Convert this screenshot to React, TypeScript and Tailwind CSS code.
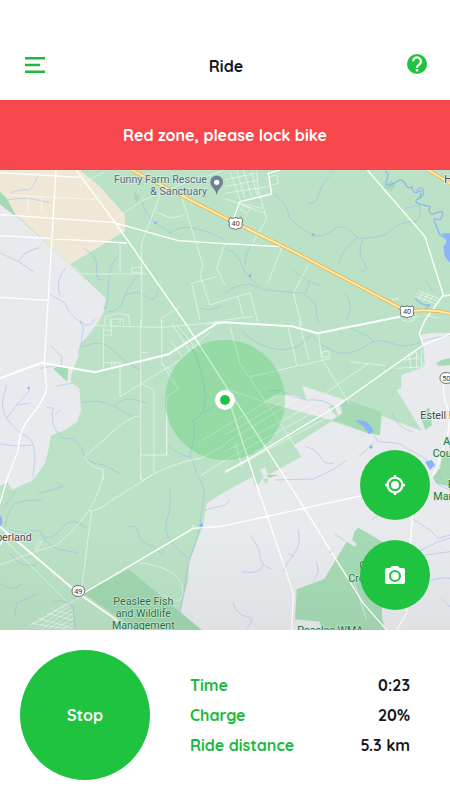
import React from "react";

const stats = [
  { label: "Time", value: "0:23" },
  { label: "Charge", value: "20%" },
  { label: "Ride distance", value: "5.3 km" },
];

function MenuIcon() {
  return (
    <svg viewBox="0 0 20 16" className="h-4 w-5" fill="currentColor" aria-hidden="true">
      <path d="M0 0H20V2.4H0ZM0 6.8H15V9.2H0ZM0 13.6H20V16H0Z" />
    </svg>
  );
}

function HelpIcon() {
  return (
    <svg viewBox="0 0 20 20" className="size-5" aria-hidden="true">
      <circle cx="10" cy="10" r="10" fill="currentColor" />
      <path
        d="M6.1 7.2A3.9 3.9 0 1 1 12.8 10L11.2 11.4Q10 12.4 10 14"
        fill="none"
        stroke="#fff"
        strokeWidth="2.2"
      />
      <path d="M8.8 15H11.3V17.4H8.8Z" fill="#fff" />
    </svg>
  );
}

function LocateIcon() {
  return (
    <svg viewBox="0 0 20 20" className="size-5" aria-hidden="true">
      <path d="M8.8 0H11.2V3H8.8ZM8.8 17H11.2V20H8.8ZM0 8.8H3V11.2H0ZM17 8.8H20V11.2H17Z" fill="currentColor" />
      <circle cx="10" cy="10" r="7.4" fill="none" stroke="currentColor" strokeWidth="2.4" />
      <circle cx="10" cy="10" r="4" fill="currentColor" />
    </svg>
  );
}

function CameraIcon() {
  return (
    <svg viewBox="0 0 20 18" className="h-[18px] w-5" aria-hidden="true">
      <path
        d="M7 0H13L14.8 2H18Q20 2 20 4V16Q20 18 18 18H2Q0 18 0 16V4Q0 2 2 2H5.2ZM10 4A6 6 0 1 0 10 16A6 6 0 1 0 10 4Z"
        fill="currentColor"
        fillRule="evenodd"
      />
      <circle cx="10" cy="10" r="3.9" fill="currentColor" />
    </svg>
  );
}

function Shield({ x, y, label }: { x: number; y: number; label: string }) {
  return (
    <g transform={`translate(${x} ${y})`}>
      <path
        d="M-17 -17Q-9 -13 0 -17Q9 -13 17 -17L21 -9Q17 0 20 8Q17 17 6 16L0 19L-6 16Q-17 17 -20 8Q-17 0 -21 -9Z"
        fill="#fff"
        stroke="#6b7075"
        strokeWidth="3"
      />
      <text y="8" textAnchor="middle" fontSize="22" fill="#3c4043">
        {label}
      </text>
    </g>
  );
}

function RoundSign({ x, y, label }: { x: number; y: number; label: string }) {
  return (
    <g transform={`translate(${x} ${y})`}>
      <rect x="-19" y="-16" width="38" height="32" rx="15" fill="#fff" stroke="#6b7075" strokeWidth="3" />
      <text y="8" textAnchor="middle" fontSize="22" fill="#3c4043">
        {label}
      </text>
    </g>
  );
}

function Terrain() {
  return (
    <g>
      <rect width="1350" height="1380" fill="#bbe2c6" />
      <path d="M0 0H240L300 50L375 135V183L210 283L0 90Z" fill="#f0e8d7" />
      <path
        d="M0 103L50 140L210 283L317 385L310 430L295 455L270 490L243 520L235 560L215 610L212 635L238 655L243 720L232 755L195 780L152 797L148 830L135 880L98 932L65 945L37 960L22 937L0 948Z"
        fill="#e8eaed"
      />
      <path d="M0 65L20 84L50 141L0 102Z" fill="#a6dab5" />
      <path d="M160 597L172 588L205 592L202 635Z" fill="#a6dab5" />
      <path
        d="M1350 488L1295 489L1260 495L1270 530L1275 590L1205 615L1203 655L1190 660L1265 782L1145 738L1140 795L1105 790L995 754L883 825L903 860L800 918L805 935L795 940L788 920L780 938L765 948L758 920L675 965L620 1000L610 1060L600 1090L567 1180L565 1230L540 1325L605 1380H1350Z"
        fill="#e8eaed"
      />
      <path
        d="M790 695L825 675L880 675L920 690L907 647L1035 690L1018 704L1025 730L1015 738L1002 704L985 711L1010 740L995 750Z"
        fill="#e8eaed"
      />
      <path d="M780 900L795 892L807 920L795 928Z" fill="#e8eaed" />
      <path d="M1040 690L1143 725L1140 795L1105 790L1000 750L1016 739L1030 728L1024 708Z" fill="#a6dab5" />
      <path d="M1308 580L1325 570L1350 565V585L1318 588ZM1268 725L1288 712L1296 765L1276 780L1265 750ZM1350 845L1325 865L1320 895L1300 920L1308 940L1350 950Z" fill="#a6dab5" />
      <path d="M800 915H835L808 923ZM385 1198L605 1380H412L250 1270Z" fill="#a0d7b0" />
      <path
        d="M1075 1073L1155 1120L1145 1335L1155 1380H965L960 1355L885 1348L890 1258L973 1227L1040 1115L1065 1130L1070 1122L1057 1110L1063 1085Z"
        fill="#a6dab5"
      />
      <path d="M1150 48L1175 30L1186 46L1175 62L1155 57ZM405 65L420 80L412 95L400 85Z" fill="#a6dab5" />
    </g>
  );
}

function Water() {
  return (
    <g>
      <path d="M1325 190H1350V278L1335 260L1330 230L1340 215Z" fill="#8ab4f8" />
      <path
        d="M1155 5Q1170 8 1160 30T1180 42Q1205 20 1215 40T1235 50Q1240 75 1255 65T1258 85Q1275 75 1270 60T1250 62M1255 85Q1240 95 1255 100T1290 110Q1280 140 1310 128T1320 150Q1295 140 1305 160T1320 195L1338 205M1245 385Q1270 410 1285 405T1265 425"
        fill="none"
        stroke="#8fb9ed"
        strokeWidth="4"
      />
      <path d="M1065 752Q1110 745 1120 785L1105 792Q1095 765 1065 752ZM1275 875L1295 870L1305 885L1290 900ZM0 1035Q15 1055 0 1070ZM597 1065L610 1058L605 1080Z" fill="#8ab4f8" />
      <g fill="none" stroke="#86adf0" strokeOpacity="0.4" strokeWidth="3">
        <g transform="translate(0 -15)">
          <path d="M30 85Q65 70 80 75T115 30M20 105Q80 95 110 105L150 112M0 263Q35 280 55 290T100 320M55 290Q75 255 120 248M195 310Q165 350 180 390M150 388L195 415Q205 445 240 470T285 460M250 250Q295 270 290 310T310 345M360 268Q325 295 325 365T310 430M415 330Q380 370 370 405T325 440M370 395Q410 370 440 395T475 365M425 110Q440 160 475 180T510 205Q540 180 585 190T675 225M600 430Q640 440 665 420" />
        </g>
        <g transform="translate(675 -15)">
          <path d="M325 20Q290 55 280 90T250 112M145 85Q190 120 190 145T270 215Q310 210 330 190T400 220Q480 220 500 195T575 170Q590 150 585 120L540 130M395 220Q350 255 340 295M415 220Q395 260 415 290T410 320M0 250Q40 265 50 300T120 375L235 385L270 415L280 475M80 235Q60 270 60 300M0 385Q55 340 105 370M200 315L255 350L240 385M255 350L285 360M360 385Q390 420 365 465M600 345L625 380" />
        </g>
        <g transform="translate(0 450)">
          <path d="M240 0L250 25L245 60L235 100M150 75L185 110L185 135L120 145M20 195Q-5 260 20 295Q55 340 80 350T105 420L98 470M20 295L50 255L90 210M50 255L85 250M140 262L160 265Q150 305 170 335T215 355Q240 370 250 400T310 435L360 460M165 285L180 270M0 372L50 378L95 375M170 198L215 190M245 80Q310 55 340 90T425 152M245 248Q300 235 345 260T400 290M345 260Q370 220 440 250M550 45Q590 90 610 185T580 300Q590 340 570 400L590 460M610 280L640 260M505 375Q530 405 570 410" />
        </g>
        <g transform="translate(675 450)">
          <path d="M50 30Q90 75 140 85T225 75L260 45Q290 80 330 95T420 80Q455 50 500 70T600 60L675 45M370 20L430 50L450 70M125 215Q160 205 185 220T245 240Q305 235 330 265M500 275Q510 320 565 337M445 345L460 365L520 370L600 415L640 450L650 480M400 410L435 380L450 365M240 380Q270 385 285 410T325 430M150 480L265 477L330 445L365 420" />
        </g>
        <g transform="translate(0 915)">
          <path d="M15 155Q25 85 60 80T125 75M115 55L190 35L170 20M10 100L50 45M30 165L80 175Q110 155 130 180T200 145Q230 130 260 160M120 175Q150 220 185 225T235 235M30 235Q60 280 110 270M0 325Q35 355 70 325M510 40Q515 90 500 140T565 250M385 155Q410 145 415 175T460 215L490 240M615 105L675 90M590 0Q620 35 610 80T600 160L565 265L540 420M160 380Q210 370 220 400L225 460M45 420L50 385L115 355" />
        </g>
        <g transform="translate(675 915)">
          <path d="M75 180Q105 220 105 245T140 282M50 290Q105 300 115 270M220 165Q230 210 205 240T175 290M190 235L205 243M275 260L280 290L265 320M325 175L360 198M25 385Q35 420 65 425T65 460M560 130L615 165L640 190L675 180M570 235L640 200L675 190M600 240L675 230M440 135L490 100M0 90L15 75M620 315Q650 305 675 310M650 370L675 395M620 0L640 30L675 45" />
        </g>
      </g>
      <g fill="#8ab4f8">
        <circle cx="466" cy="158" r="4" />
        <circle cx="940" cy="194" r="4" />
        <circle cx="750" cy="317" r="4" />
        <circle cx="86" cy="654" r="4" />
        <circle cx="1113" cy="831" r="5" />
        <circle cx="993" cy="1145" r="4" />
      </g>
    </g>
  );
}

function Roads() {
  return (
    <g fill="none" strokeLinejoin="round">
      {/* minor tracks */}
      <g stroke="#fff" strokeOpacity="0.5" strokeWidth="3">
        <g transform="translate(0 -15)">
          <path d="M20 90L285 103M85 90V145M125 92V145M240 60L315 20M340 165L430 105L540 60L675 15M480 90L425 235V480M465 140L510 158L550 152M545 95L590 240L610 300L600 330L630 420L675 405M675 235L650 310L675 360M575 355L650 335M575 355L600 465M360 235V327M220 300L245 327H440M395 308H425V322H395ZM315 480V455L355 445L385 450L390 480M330 480V462H370V480M485 480V460L540 425M620 480Q650 465 675 470" />
        </g>
        <g transform="translate(675 -15)">
          <path d="M0 100L120 145L125 160L80 240L5 235M15 20L45 105M35 15L60 100M55 15L80 95M80 20L95 90M95 20L100 90M0 45L90 25M0 65L100 45M0 85L130 65M100 75L120 145M55 120L75 130L65 145L48 135ZM45 115L110 130M135 35L155 30L160 55L140 60M170 250L128 355M250 300L205 385L230 480M0 405L75 383L100 475M38 395L55 455M0 465L85 455M575 385L640 410M580 378L645 402M570 393L635 418M595 380L580 405M610 385L595 410M625 392L610 415M500 405L520 400M535 440L550 460L580 455M600 450L640 460" />
        </g>
        <g transform="translate(0 450)">
          <path d="M285 17L485 22L675 5M310 25V145M310 30H335V45H310M335 0V30M360 0V10M422 0V480M485 0V130L535 207L500 230V405M485 130L520 160M310 128H360V230L540 120L630 35M335 125V140M345 125V140M425 97H445M422 190L462 210V457M500 280V405H422M255 410L350 325Q380 295 420 287M255 410Q265 440 310 450V480M430 480Q510 430 600 415L675 375M605 362L675 320M605 465L675 420M515 10L570 95M530 15L595 95M515 65L545 110M550 60L580 85" />
        </g>
        <g transform="translate(675 450)">
          <path d="M15 20L45 130L215 385M188 15L215 135M222 5L253 120M75 170L320 115M280 40L290 115L375 255M288 97L310 93L315 108L295 114ZM375 125L480 137M300 220L430 130M0 205L115 245M0 320L175 215M0 345L190 235M0 370L220 235M0 395L250 260M0 420L280 270M0 460L310 290M30 365L50 440M510 145L600 140M535 130L570 95L600 140M525 120L580 115M550 100L560 150M575 95L575 145M590 90V140M530 0L550 5L570 0" />
        </g>
        <g transform="translate(0 915)">
          <path d="M310 0Q300 50 270 100T170 210L105 230L0 270M265 108Q290 110 330 80L455 0M275 108L245 340M105 225L115 200H125L110 230M15 195L200 380M420 263Q540 280 548 340T490 360M245 365L90 450M100 450L200 385M110 460L210 392M125 462L217 402M145 462L220 415M165 462L220 430M185 462L220 445M95 445L200 462M115 430L220 460M140 415L220 435M160 405L220 420M420 0L430 20M575 165L580 150L590 160" />
        </g>
        <path d="M1055 1215L1100 1350" />
      </g>
      {/* local roads */}
      <g stroke="#fff">
        <path strokeWidth="4" d="M0 8L238 22M228 0L340 150L560 465L675 644L860 930L1090 1300L1160 1380M168 0L140 465L133 580L140 650Q135 690 95 735T55 840L20 930L0 1000M0 134L340 157L535 212L675 221L840 230M0 197L380 219M0 382L143 391M695 160L720 95L815 72L805 10L840 0M1102 0L1275 200L1330 375L1275 450L1258 490L1270 525M1350 492L1270 525L1010 708L745 868L675 905M690 700L765 930L880 1270L875 1380M675 1067L1080 978L1140 965M250 1270L580 1075L675 1068M1350 375L1330 378M1330 640Q1330 690 1342 710T1342 800L1310 895L1240 1010L1230 1130L1220 1330L1190 1380M0 1125L20 1090" />
        <path strokeWidth="6" d="M0 625L125 578L285 607L505 553L650 460L675 457L875 469L953 490L1200 440M0 1070L235 1270L350 1350L390 1380" />
      </g>
      {/* highway */}
      <path d="M395 0L675 143L885 247L1195 410L1220 425Q1290 415 1350 430M1285 0L1350 40" stroke="#efb94f" strokeWidth="11" />
      <path d="M395 0L675 143L885 247L1195 410L1220 425Q1290 415 1350 430M1285 0L1350 40" stroke="#ffefb5" strokeWidth="5" />
    </g>
  );
}

function MapLabels() {
  return (
    <g fontSize="32" fontWeight="400" style={{ fontFamily: "Roboto, sans-serif" }} strokeLinejoin="round">
      <Shield x={707} y={160} label="40" />
      <Shield x={1221} y={425} label="40" />
      <RoundSign x={235} y={1263} label="49" />
      <RoundSign x={1339} y={624} label="50" />
      <path d="M650 77Q646 60 636 51Q630 44 630 36A20 20 0 0 1 670 36Q670 44 664 51Q654 60 650 77Z" fill="#6f8294" stroke="#e5f3e9" strokeWidth="1" />
      <circle cx="650" cy="37" r="8" fill="#fff" />
      <g fill="#566b7f" stroke="#d9efdf" strokeWidth="4" paintOrder="stroke" textAnchor="end">
        <text x="621" y="40">Funny Farm Rescue</text>
        <text x="621" y="75">&amp; Sanctuary</text>
      </g>
      <g fill="#45494d" stroke="#f4f7f5" strokeWidth="4" paintOrder="stroke">
        <text x="1333" y="39">Ha</text>
        <text x="1261" y="746">Estell Manor</text>
        <text x="95" y="1112" textAnchor="end">Cumberland</text>
      </g>
      <g fill="#1f7544" stroke="#d3edda" strokeWidth="4" paintOrder="stroke">
        <text x="1330" y="824">Atlantic</text>
        <text x="1298" y="860">County</text>
        <text x="1343" y="954">Park</text>
        <text x="1300" y="990">Manor</text>
        <text x="1078" y="1198">Great</text>
        <text x="1045" y="1236">Creek</text>
        <g textAnchor="middle">
          <text x="430" y="1306">Peaslee Fish</text>
          <text x="430" y="1341">and Wildlife</text>
          <text x="430" y="1377">Management</text>
          <text x="991" y="1391">Peaslee WMA</text>
        </g>
      </g>
    </g>
  );
}

function RideMap() {
  return (
    <svg
      viewBox="0 0 1350 1380"
      preserveAspectRatio="xMidYMid slice"
      className="absolute inset-0 size-full"
      role="img"
      aria-label="Map of your current location"
    >
      <defs>
        <linearGradient id="map-shade" x1="0" y1="0" x2="0" y2="1">
          <stop offset="0" stopColor="#000" stopOpacity="0" />
          <stop offset="1" stopColor="#000" stopOpacity="0.04" />
        </linearGradient>
      </defs>
      <Terrain />
      <Water />
      <Roads />
      <MapLabels />
      <rect y="1080" width="1350" height="300" fill="url(#map-shade)" />
      <circle cx="675" cy="690" r="180" fill="#20c33f" fillOpacity="0.24" />
      <circle cx="675" cy="690" r="30" fill="#fff" />
      <circle cx="675" cy="690" r="15" fill="#20c33f" />
    </svg>
  );
}

export default function App() {
  return (
    <main className="flex min-h-screen flex-col bg-white font-['Quicksand','Lato',sans-serif] text-base font-bold text-[#17171c]">
      <header className="flex h-[100px] items-end justify-between pr-[18px] pb-5 pl-5">
        <button type="button" aria-label="Open menu" className="flex size-[30px] items-center justify-center text-[#20b83e]">
          <MenuIcon />
        </button>
        <h1 className="pb-0.5">Ride</h1>
        <button type="button" aria-label="Help" className="flex size-[30px] items-center justify-center pb-0.5 text-[#20c33f]">
          <HelpIcon />
        </button>
      </header>

      <div role="alert" className="flex h-[70px] items-center justify-center bg-[#f5474c] text-white">
        Red zone, please lock bike
      </div>

      <section aria-label="Map" className="relative flex min-h-[460px] flex-1 flex-col items-end justify-end gap-5 overflow-hidden p-5">
        <RideMap />
        <button type="button" aria-label="Center on my location" className="relative flex size-[70px] items-center justify-center rounded-full bg-[#20c33f] text-white">
          <LocateIcon />
        </button>
        <button type="button" aria-label="Take a photo" className="relative flex size-[70px] items-center justify-center rounded-full bg-[#20c33f] text-white">
          <CameraIcon />
        </button>
      </section>

      <footer className="flex items-center gap-10 py-5 pr-10 pl-5">
        <button type="button" className="size-[130px] shrink-0 rounded-full bg-[#20c33f] text-white">
          Stop
        </button>
        <dl className="flex flex-1 flex-col gap-1.5">
          {stats.map((stat) => (
            <div key={stat.label} className="flex justify-between">
              <dt className="text-[#20b83e]">{stat.label}</dt>
              <dd>{stat.value}</dd>
            </div>
          ))}
        </dl>
      </footer>
    </main>
  );
}
